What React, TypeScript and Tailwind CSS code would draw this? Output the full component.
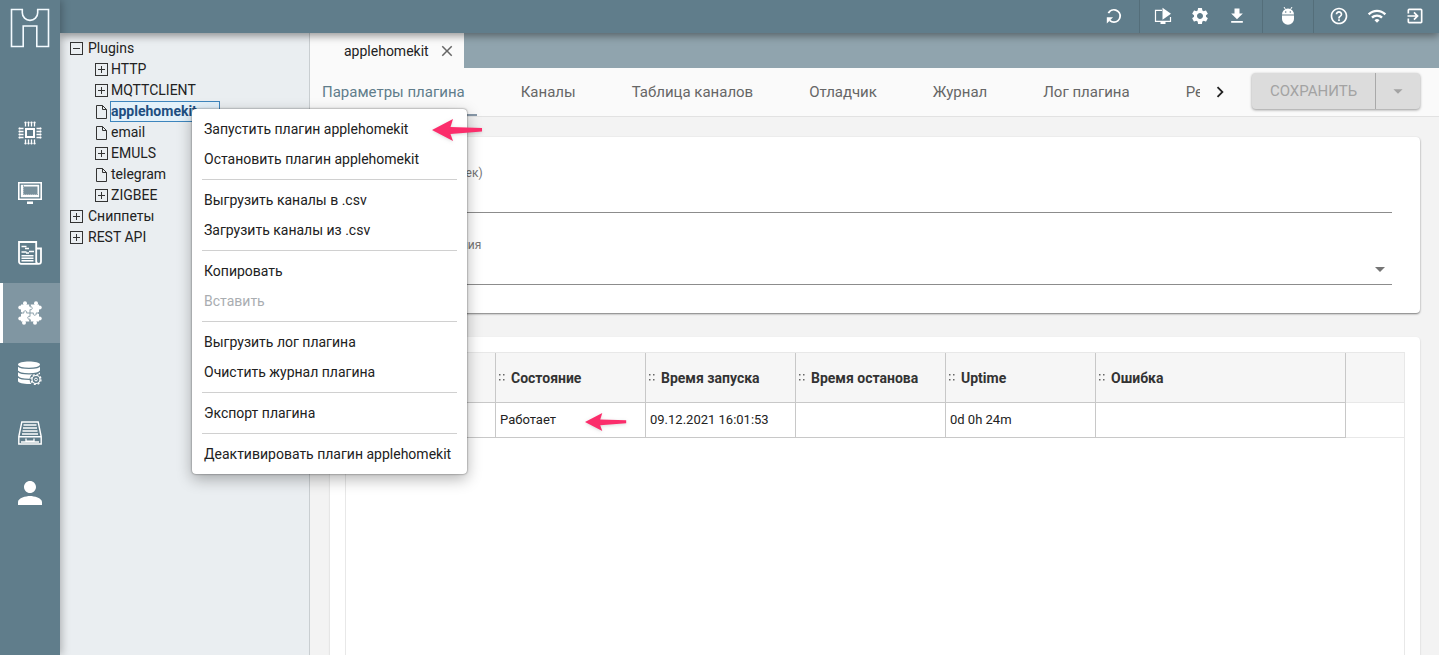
import { ReactNode } from "react"
import { MdSettings, MdFileDownload, MdHelpOutline, MdWifi, MdExitToApp, MdPerson, MdClose, MdChevronRight, MdArrowDropDown } from "react-icons/md"

function Logo() {
  return (
    <svg viewBox="0 0 40 40" className="w-10 h-10" fill="none" stroke="#f4fbff" strokeWidth="1.6" aria-hidden="true">
      <path d="M1.5 1.5h10.8v3.2a7.7 7.7 0 0 0 15.4 0V1.5H38.5V38.5H26.8V18H13.2V38.5H1.5z" />
    </svg>
  )
}

function ChipIcon() {
  return (
    <svg viewBox="0 0 24 24" className="w-6 h-6" stroke="#fff" aria-hidden="true">
      <rect x="8" y="8" width="8" height="8" fill="none" strokeWidth="2" />
      <path d="M7.5 1v4.5M10.5 1v4.5M13.5 1v4.5M16.5 1v4.5M7.5 18.5v4.5M10.5 18.5v4.5M13.5 18.5v4.5M16.5 18.5v4.5M1 7.5h4.5M1 10.5h4.5M1 13.5h4.5M1 16.5h4.5M18.5 7.5h4.5M18.5 10.5h4.5M18.5 13.5h4.5M18.5 16.5h4.5" strokeWidth="1.3" />
      <path d="M7.5 1.5h.01M10.5 1.5h.01M13.5 1.5h.01M16.5 1.5h.01M7.5 22.5h.01M10.5 22.5h.01M13.5 22.5h.01M16.5 22.5h.01M1.5 7.5h.01M1.5 10.5h.01M1.5 13.5h.01M1.5 16.5h.01M22.5 7.5h.01M22.5 10.5h.01M22.5 13.5h.01M22.5 16.5h.01" strokeWidth="2.2" strokeLinecap="round" />
    </svg>
  )
}

function MonitorIcon() {
  return (
    <svg viewBox="0 0 24 24" className="w-6 h-6" aria-hidden="true">
      <path d="M0 1h24v18H0z" fill="#fff" />
      <path d="M2.2 3.2h19.6v13.6H2.2z" fill="none" stroke="#607d8b" strokeWidth="1.2" />
      <path d="M6 5.5h13.5v7.5H6z" fill="#78909c" />
      <path d="M5.5 4.5v9h15" fill="none" stroke="#607d8b" strokeWidth="1" strokeDasharray="1.2 .8" />
      <path d="M9 20.5h6V23H9z" fill="#fff" />
    </svg>
  )
}

function NewsIcon() {
  return (
    <svg viewBox="0 0 24 24" className="w-6 h-6" fill="none" stroke="#fff" aria-hidden="true">
      <path d="M20.5 22.8H3a2 2 0 0 1-2-2V1h17.2v19.5a2.4 2.4 0 0 0 4.8 0V7.5h-4.5" strokeWidth="1.8" />
      <path d="M3.5 5.5h5M7 7.5h4M3.5 11h5M11 10.5h5M8 12h3M3.5 14.8h12M3.5 17.3h12M3.5 19.8h12" strokeWidth="1.5" />
    </svg>
  )
}

function PuzzleIcon() {
  return (
    <svg viewBox="0 0 24 24" className="w-6 h-6" aria-hidden="true">
      <path d="M3 3.5h18v17H3z" fill="#fff" />
      <g fill="#fff">
        <circle cx="7" cy="2.3" r="2" />
        <circle cx="18" cy="2.3" r="2" />
        <circle cx="6" cy="21.7" r="2" />
        <circle cx="17" cy="21.7" r="2" />
        <circle cx="2.3" cy="6.5" r="2" />
        <circle cx="2.3" cy="17.5" r="2" />
        <circle cx="21.7" cy="6.500" r="2" />
        <circle cx="21.7" cy="17.5" r="2" />
      </g>
      <path d="M12 3v2M12 19v2M2.5 12h1.500M20 12h1.500" stroke="#8096a2" strokeWidth="1.4" />
      <path d="M12 4v2c3-1.2 3 3.7 0 2.5V15.5c-3-1.2-3 3.7 0 2.5V20M3.5 12H6c-1.2-3 3.7-3 2.500 0H15.5c-1.2 3 3.7 3 2.5 0H20.5" fill="none" stroke="#8096a2" strokeWidth=".9" />
    </svg>
  )
}

function DatabaseIcon() {
  return (
    <svg viewBox="0 0 24 24" className="w-6 h-6" aria-hidden="true">
      <path d="M0 3.5C0-.5 22-.5 22 3.5V20c0 4-22 4-22 0z" fill="#fff" />
      <path d="M0 4.5c1 3.7 21 3.7 22 0M0 10c1 3.7 21 3.7 22 0M0 15.5c1 3.7 21 3.7 22 0" fill="none" stroke="#607d8b" strokeWidth="1.3" />
      <circle cx="18" cy="18.5" r="6.5" fill="#607d8b" />
      <circle cx="18" cy="18.5" r="4" fill="none" stroke="#fff" strokeWidth="1.2" />
      <circle cx="18" cy="18.5" r="5" fill="none" stroke="#fff" strokeWidth="1.3" strokeDasharray="1.96 1.96" />
      <circle cx="18" cy="18.5" r="1.4" fill="none" stroke="#fff" strokeWidth="1" />
    </svg>
  )
}

function ArchiveIcon() {
  return (
    <svg viewBox="0 0 24 24" className="w-6 h-6" fill="none" stroke="#fff" aria-hidden="true">
      <path d="M3.8 1h16.4L23.2 15.5V23H.8V15.5zM.8 15.8h22.4" strokeWidth="1.4" />
      <path d="M5.5 4h13M5 7h14M4.5 10h15M4 13h16" strokeWidth="1.5" />
      <path d="M3 21h18M8 17.5v2.7h8v-2.7" strokeWidth="1.3" />
    </svg>
  )
}

function RefreshIcon() {
  return (
    <svg viewBox="0 0 18 18" className="w-[18px] h-[18px]" aria-hidden="true">
      <path d="M3.400 6.200A6.200 6.200 0 1 1 9 15.200c-1.700 0-3.200-.7-4.300-1.800" fill="none" stroke="#fff" strokeWidth="1.8" />
      <path d="M1.800 10.200v6.300l6.300-6.300z" fill="#fff" />
    </svg>
  )
}

function DisplayPlayIcon() {
  return (
    <svg viewBox="0 0 18 18" className="w-[18px] h-[18px]" aria-hidden="true">
      <path d="M8 3.300H1.500v11h15V10" fill="none" stroke="#fff" strokeWidth="1.2" />
      <path d="M8.500.8l8.500 6-8.500 6z" fill="#fff" />
      <path d="M6.500 14.500h5v2.500h-5z" fill="#fff" />
    </svg>
  )
}

function AndroidIcon() {
  return (
    <svg viewBox="0 0 18 18" className="w-[18px] h-[18px]" aria-hidden="true">
      <path d="M5 0l1.500 2.500M13 0l-1.500 2.500" stroke="#fff" strokeWidth="1" />
      <path d="M3 7.500a6 6 0 0 1 12 0zM3 8.500h12V12a6 5.800 0 0 1-12 0z" fill="#fff" />
      <circle cx="6.7" cy="5" r=".8" fill="#607d8b" />
      <circle cx="11.3" cy="5" r=".8" fill="#607d8b" />
    </svg>
  )
}

function ExpandIcon({ open }: { open?: boolean }) {
  return (
    <svg viewBox="0 0 13 13" className="w-[13px] h-[13px] shrink-0" fill="none" stroke="#333" aria-hidden="true">
      <rect x=".5" y=".5" width="12" height="12" />
      <path d={open ? "M3 6.500h7" : "M3 6.500h7M6.500 3v7"} />
    </svg>
  )
}

function FileIcon() {
  return (
    <svg viewBox="0 0 13 14" className="w-[13px] h-[14px] shrink-0" fill="none" stroke="#333" aria-hidden="true">
      <path d="M1.500.5h6L11.500 4.500v9h-10zM7.500.5v4h4" />
    </svg>
  )
}

function PinkArrow({ className }: { className: string }) {
  return (
    <svg viewBox="0 0 51 26" className={className} aria-hidden="true">
      <path d="M0 13L21 2l-2.500 8L50 11v3.500L18.500 17 21 24z" fill="#fb2d6b" />
    </svg>
  )
}

const sections = [
  { label: "Оборудование", icon: <ChipIcon /> },
  { label: "Экраны", icon: <MonitorIcon /> },
  { label: "Отчеты", icon: <NewsIcon /> },
  { label: "Плагины", icon: <PuzzleIcon />, active: true },
  { label: "База данных", icon: <DatabaseIcon /> },
  { label: "Ресурсы", icon: <ArchiveIcon /> },
  { label: "Доступ", icon: <MdPerson className="w-9 h-9 shrink-0 text-white" /> },
]

const tree = [
  { label: "Plugins", level: 0, kind: "open" },
  { label: "HTTP", level: 1, kind: "closed" },
  { label: "MQTTCLIENT", level: 1, kind: "closed" },
  { label: "applehomekit", level: 1, kind: "file", selected: true },
  { label: "email", level: 1, kind: "file" },
  { label: "EMULS", level: 1, kind: "closed" },
  { label: "telegram", level: 1, kind: "file" },
  { label: "ZIGBEE", level: 1, kind: "closed" },
  { label: "Сниппеты", level: 0, kind: "closed" },
  { label: "REST API", level: 0, kind: "closed" },
]

const tabs = ["Параметры плагина", "Каналы", "Таблица каналов", "Отладчик", "Журнал", "Лог плагина", "Ресурсы"]

const columns = ["Состояние", "Время запуска", "Время останова", "Uptime", "Ошибка"]
const row = ["Работает", "09.12.2021 16:01:53", "", "0d 0h 24m", ""]

const menu = [
  ["Запустить плагин applehomekit", "Остановить плагин applehomekit"],
  ["Выгрузить каналы в .csv", "Загрузить каналы из .csv"],
  ["Копировать", "Вставить"],
  ["Выгрузить лог плагина", "Очистить журнал плагина"],
  ["Экспорт плагина"],
  ["Деактивировать плагин applehomekit"],
]

function ToolButton({ label, wide = true, children }: { label: string; wide?: boolean; children: ReactNode }) {
  return (
    <button aria-label={label} className={`${wide ? "w-[38px]" : "w-[37px]"} h-8 flex items-center justify-center text-white`}>
      {children}
    </button>
  )
}

function Sidebar() {
  return (
    <aside className="relative z-20 w-[60px] shrink-0 bg-[#607d8b] shadow-[2px_0_8px_rgba(0,0,0,0.25)] flex flex-col">
      <a href="#" aria-label="Home" className="h-[103px] pt-2 flex justify-center">
        <Logo />
      </a>
      {sections.map((s) => (
        <button
          key={s.label}
          aria-label={s.label}
          className={`h-[60px] shrink-0 flex items-center justify-center border-x-[3px] border-r-transparent ${
            s.active ? "border-l-white bg-[#8096a2]" : "border-l-transparent"
          }`}
        >
          {s.icon}
        </button>
      ))}
    </aside>
  )
}

function Toolbar() {
  return (
    <header className="relative z-10 h-[33px] shrink-0 bg-[#607d8b] shadow-[0_3px_8px_rgba(0,0,0,0.4)] flex justify-end pr-[5px]">
      <div className="flex px-1.5 border-r border-[#546e7a]">
        <ToolButton label="Обновить"><RefreshIcon /></ToolButton>
      </div>
      <div className="flex pl-1 pr-[7px] border-r border-[#546e7a]">
        <ToolButton label="Экран" wide={false}><DisplayPlayIcon /></ToolButton>
        <ToolButton label="Настройки" wide={false}><MdSettings size={20} /></ToolButton>
        <ToolButton label="Скачать" wide={false}><MdFileDownload size={20} /></ToolButton>
      </div>
      <div className="flex px-1.5 border-r border-[#546e7a]">
        <ToolButton label="Android"><AndroidIcon /></ToolButton>
      </div>
      <div className="flex pl-1.5">
        <ToolButton label="Помощь"><MdHelpOutline size={20} /></ToolButton>
        <ToolButton label="Сеть"><MdWifi size={20} /></ToolButton>
        <ToolButton label="Выход"><MdExitToApp size={20} /></ToolButton>
      </div>
    </header>
  )
}

function PluginTree() {
  return (
    <nav className="w-[250px] shrink-0 bg-[#eaeef1] border-r border-[#c9ced1] pt-[5px] text-sm text-[#222]">
      <ul>
        {tree.map((n) => (
          <li key={n.label} className={`h-[21px] flex items-center ${n.level ? "pl-[35px] gap-0.5" : "pl-2.5 gap-1"}`}>
            {n.kind === "file" ? <FileIcon /> : <ExpandIcon open={n.kind === "open"} />}
            <a
              href="#"
              className={
                n.selected
                  ? "w-[110px] h-[21px] leading-[19px] border border-[#3d85bd] bg-[#e3f1fa] font-bold text-[#1e4e80]"
                  : "h-[21px] leading-[19px] border border-transparent"
              }
            >
              {n.label}
            </a>
          </li>
        ))}
      </ul>
    </nav>
  )
}

function SettingsCard() {
  return (
    <section className="shrink-0 bg-white rounded shadow-[0_1px_2px_rgba(0,0,0,0.5)] h-44 px-7 pt-7 flex flex-col">
      <label htmlFor="timeout" className="h-4 text-xs leading-4 text-[#757575]">Таймаут запуска (сек)</label>
      <input id="timeout" className="h-8 border-b border-[#8c8c8c] outline-none text-base" />
      <label htmlFor="loglevel" className="mt-6 h-4 text-xs leading-4 text-[#757575]">Уровень логирования</label>
      <div className="h-8 flex items-center border-b border-[#8c8c8c]">
        <select id="loglevel" className="flex-1 appearance-none outline-none bg-transparent" />
        <MdArrowDropDown size={24} className="text-[#757575]" />
      </div>
    </section>
  )
}

function StatusCard() {
  return (
    <section className="flex-1 bg-white rounded-t shadow-[0_1px_2px_rgba(0,0,0,0.2)] px-[15px] pt-[15px] flex">
      <div className="flex-1 border border-b-0 border-[#e8e8e8]">
        <table className="w-full table-fixed border-separate border-spacing-0 text-[13px]">
          <colgroup>
            <col className="w-[150px]" />
            <col className="w-[150px]" />
            <col className="w-[150px]" />
            <col className="w-[150px]" />
            <col className="w-[150px]" />
            <col className="w-[250px]" />
            <col />
          </colgroup>
          <thead>
            <tr className="h-[50px] bg-[#f6f6f6] text-sm text-[#333]">
              <th className="border-r border-b border-[#c8c8c8]" />
              {columns.map((c) => (
                <th key={c} className="border-r border-b border-[#c8c8c8] pl-[3px] text-left font-bold">
                  <div className="flex items-center gap-[5px]">
                    <svg viewBox="0 0 7 8" className="w-[7px] h-2" fill="#666" aria-hidden="true">
                      <path d="M0 0h1.500v1.500H0zM4 0h1.500v1.500H4zM0 5h1.500v1.500H0zM4 5h1.500v1.500H4z" />
                    </svg>
                    {c}
                  </div>
                </th>
              ))}
              <th className="border-b border-[#e8e8e8]" />
            </tr>
          </thead>
          <tbody>
            <tr className="h-[35px] text-[#222]">
              <td className="border-r border-b border-[#c8c8c8]" />
              {row.map((v, i) => (
                <td key={columns[i]} className="border-r border-b border-[#c8c8c8] pl-1">{v}</td>
              ))}
              <td className="border-b border-[#e8e8e8]" />
            </tr>
          </tbody>
        </table>
      </div>
    </section>
  )
}

function ContextMenu() {
  return (
    <div role="menu" className="absolute z-30 left-48 top-[109px] w-[275px] py-[5px] bg-white rounded shadow-[0_0_2px_rgba(0,0,0,0.6),0_5px_15px_rgba(0,0,0,0.3)]">
      {menu.map((group, i) => (
        <div key={i}>
          {i > 0 && <hr className="mx-2.5 my-[5px] border-[#d0d0d0]" />}
          {group.map((item) => (
            <button
              key={item}
              role="menuitem"
              disabled={item === "Вставить"}
              className="block w-full h-[30px] px-3 text-left text-sm whitespace-nowrap text-[#212121] disabled:text-[#a9adb1]"
            >
              {item}
            </button>
          ))}
        </div>
      ))}
    </div>
  )
}

export default function App() {
  return (
    <div className="relative h-screen flex overflow-hidden bg-[#f3f3f3] font-['Roboto','Liberation_Sans',sans-serif]">
      <Sidebar />
      <div className="flex-1 min-w-0 flex flex-col">
        <Toolbar />
        <div className="flex-1 min-h-0 flex">
          <PluginTree />
          <main className="flex-1 min-w-0 flex flex-col">
            <div className="h-[35px] shrink-0 bg-[#90a4ae] flex">
              <div className="bg-[#fafafa] w-[154px] pl-[34px] pr-2 flex items-center justify-between text-sm text-[#222]">
                applehomekit
                <button aria-label="Закрыть" className="text-[#666]"><MdClose size={18} /></button>
              </div>
            </div>
            <div className="h-[49px] shrink-0 bg-[#fafafa] border-b border-[#e2e2e2] flex pr-[19px]">
              <div className="flex-1 min-w-0 h-12 flex gap-8 overflow-hidden">
                {tabs.map((t, i) => (
                  <button
                    key={t}
                    className={`h-12 px-3 pt-0.5 shrink-0 text-[15px] border-b-2 ${
                      i === 0 ? "text-[#607d8b] border-[#8798a8]" : "text-[#666] border-transparent"
                    }`}
                  >
                    {t}
                  </button>
                ))}
              </div>
              <button aria-label="Далее" className="w-10 flex items-center justify-center text-[#222]"><MdChevronRight size={22} /></button>
              <div className="ml-3 mt-[5px] h-9 flex rounded bg-[#dcdcdc] text-[#a3a3a3] shadow-[0_1px_3px_rgba(0,0,0,0.4)]">
                <button disabled className="w-[123px] text-[15px]">СОХРАНИТЬ</button>
                <button disabled aria-label="Еще" className="w-[45px] flex items-center justify-center border-l border-[#a9a9a9]">
                  <MdArrowDropDown size={22} />
                </button>
              </div>
            </div>
            <div className="flex-1 min-h-0 pl-5 pr-[19px] pt-5 flex flex-col gap-6">
              <SettingsCard />
              <StatusCard />
            </div>
          </main>
        </div>
      </div>
      <ContextMenu />
      <PinkArrow className="absolute z-40 left-[432px] top-[117px] w-[51px] h-[26px] drop-shadow" />
      <PinkArrow className="absolute z-40 left-[585px] top-[411px] w-[42px] h-[22px] drop-shadow" />
    </div>
  )
}
